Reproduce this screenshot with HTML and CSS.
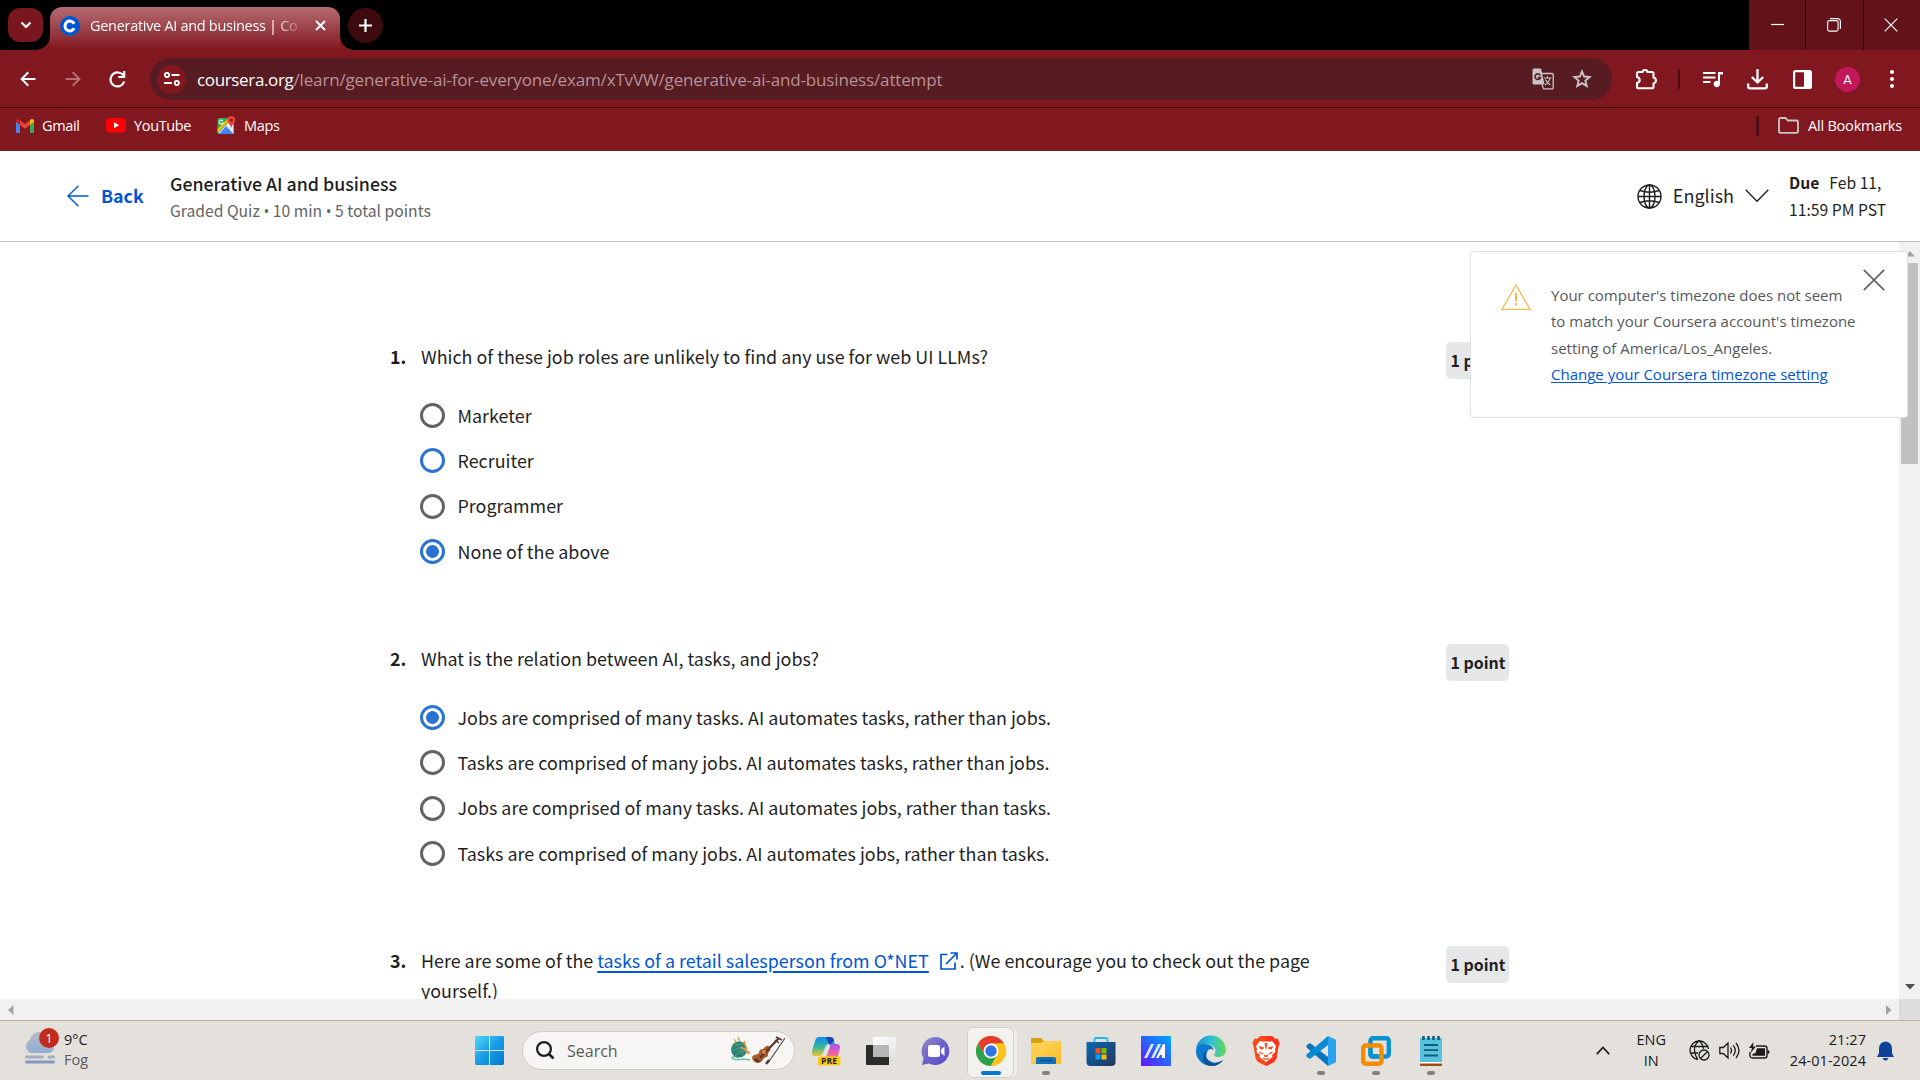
FILE: index.html
```html
<!DOCTYPE html>
<html lang="en">
<head>
<meta charset="utf-8">
<title>Generative AI and business | Coursera</title>
<link rel="stylesheet" href="styles.css">
</head>
<body>
<div class="screen">
  <div class="tabstrip">
    <div class="tab-search"><svg width="12" height="8" viewBox="0 0 12 8"><path d="M1.500 1.500 6 6l4.500-4.500" fill="none" stroke="#fff" stroke-width="2.200"/></svg></div>
    <div class="tab">
      <svg class="favicon" width="20" height="20" viewBox="0 0 20 20"><circle cx="10" cy="10" r="10" fill="#0056d2"/><path d="M14.200 12.300A4.900 4.900 0 1 1 14.200 7.700" fill="none" stroke="#fff" stroke-width="3"/></svg>
      <span class="tab-title">Generative AI and business | Co</span>
      <svg width="11" height="11" viewBox="0 0 11 11"><path d="m1 1 9 9M10 1l-9 9" stroke="#fff" stroke-width="1.900"/></svg>
    </div>
    <div class="new-tab"><svg width="13" height="13" viewBox="0 0 13 13"><path d="M6.500 0v13M0 6.500h13" stroke="#fff" stroke-width="2.200"/></svg></div>
    <div class="win-controls">
      <div class="win-button"><svg width="13" height="13" viewBox="0 0 13 13"><path d="M0 6.500h13" stroke="#fff" stroke-width="1.200"/></svg></div>
      <div class="win-button"><svg width="14" height="14" viewBox="0 0 14 14" fill="none" stroke="#fff" stroke-width="1.100"><rect x=".6" y="2.600" width="10.500" height="10.500" rx="1.800"/><path d="M3 .6h7.500a2.800 2.800 0 0 1 2.900 2.900V11"/></svg></div>
      <div class="win-button"><svg width="14" height="14" viewBox="0 0 14 14"><path d="m.7.7 12.600 12.600m0-12.600L.7 13.300" stroke="#fff" stroke-width="1.200"/></svg></div>
    </div>
  </div>

  <div class="toolbar">
    <div class="nav-icons">
      <svg width="16" height="16" viewBox="0 0 16 16" fill="none" stroke="#fff" stroke-width="2"><path d="M15.500 8H2M8.300 1.300 1.600 8l6.700 6.700"/></svg>
      <svg width="16" height="16" viewBox="0 0 16 16" fill="none" stroke="#b56f75" stroke-width="2"><path d="M.5 8H14M7.700 1.300 14.400 8l-6.700 6.700"/></svg>
      <svg width="17" height="17" viewBox="0 0 17 17"><path d="M14.500 4.800A7 7 0 1 0 15.200 10.500" fill="none" stroke="#fff" stroke-width="2.200"/><path d="M16.300 0v7H9.300V5H14V0z" fill="#fff"/></svg>
    </div>
    <div class="omnibox">
      <div class="site-info"><svg width="16" height="14" viewBox="0 0 16 14" fill="none" stroke="#fff" stroke-width="1.900"><circle cx="3" cy="3" r="2.100"/><path d="M7.500 3H15.500M0 11h8"/><circle cx="12.800" cy="11" r="2.100"/></svg></div>
      <div class="url"><span class="host">coursera.org</span>/learn/generative-ai-for-everyone/exam/xTvVW/generative-ai-and-business/attempt</div>
      <svg class="translate" width="22" height="22" viewBox="0 0 22 22"><path d="M2 .5h7l3.500 16H2A1.500 1.500 0 0 1 .5 15V2A1.500 1.500 0 0 1 2 .5z" fill="#c9c5c6"/><path d="M9.500 5.500H20A1.300 1.300 0 0 1 21.200 7v12.500a1.300 1.300 0 0 1-1.300 1.400H11.500l-1.500-4.500" fill="none" stroke="#c9c5c6" stroke-width="1.300"/><path d="M8.300 7.400A2.800 2.800 0 1 0 8.500 9.500H5.800" fill="none" stroke="#571b22" stroke-width="1.600"/><path d="M12 10h7.500M15.500 8.300V10m2.500 0c-.6 3-2.800 5.500-5 7m.5-5.500c1 2.500 3 4.500 5 5.500" fill="none" stroke="#c9c5c6" stroke-width="1.200"/></svg>
      <svg width="20" height="20" viewBox="0 0 20 20"><path d="m10 2.400 2.100 5.100 5.500.5-4.200 3.600 1.300 5.400-4.700-2.900L5.300 17l1.300-5.400L2.400 8l5.500-.5z" fill="none" stroke="#c9c5c6" stroke-width="1.900"/></svg>
    </div>
    <div class="actions">
      <svg class="act-ext" width="22" height="21" viewBox="0 0 22 21"><path d="M2 4.500q0-1.500 1.500-1.500H7.500q.5-2 2.500-2t2.500 2H17q1.500 0 1.500 1.500V8.500q2.500.5 2.500 3t-2.500 3v3.300q0 1.500-1.500 1.500H3.500q-1.500 0-1.500-1.500V14q2.700-.7 2.700-3T2 8z" fill="none" stroke="#fff" stroke-width="2.100"/></svg>
      <span class="divider act-div"></span>
      <svg class="act-music" width="20" height="17" viewBox="0 0 20 17"><path d="M0 2h12.500M0 6.500h12.500M0 11h7.500" stroke="#fff" stroke-width="2"/><path d="M15 1h5v2.500h-3V13a3.200 3.200 0 1 1-2-3z" fill="#fff"/></svg>
      <svg class="act-down" width="21" height="21" viewBox="0 0 21 21" fill="none" stroke="#fff" stroke-width="2.300"><path d="M10.500 0v13M4.800 8l5.700 5.500L16.200 8M1.200 14.500v3q0 1.800 1.800 1.800h15q1.800 0 1.800-1.800v-3"/></svg>
      <svg class="act-panel" width="19" height="19" viewBox="0 0 19 19"><rect x="1.100" y="1.100" width="16.800" height="16.800" rx="1.500" fill="none" stroke="#fff" stroke-width="2.200"/><path d="M11 1h7v17h-7z" fill="#fff"/></svg>
      <span class="avatar">A</span>
      <svg width="4" height="18" viewBox="0 0 4 18" fill="#fff"><circle cx="2" cy="2" r="2"/><circle cx="2" cy="9" r="2"/><circle cx="2" cy="16" r="2"/></svg>
    </div>
  </div>

  <div class="bookmarks">
    <a class="bookmark bm-gmail"><svg width="18" height="14" viewBox="0 0 18 14"><path d="M0 1.500V13q0 1 1 1h3V5z" fill="#4285f4"/><path d="M18 1.500V13q0 1-1 1h-3V5z" fill="#34a853"/><path d="M14 1.200V6l4-3V2q0-2-2-2-1 0-2 1.200z" fill="#fbbc04"/><path d="M4 6V1.200L9 5l5-3.800V6L9 9.800z" fill="#ea4335"/><path d="M0 2v1l4 3V1.200Q3 0 2 0 0 0 0 2z" fill="#c5221f"/></svg><span>Gmail</span></a>
    <a class="bookmark bm-youtube"><svg width="20" height="15" viewBox="0 0 20 15"><rect width="20" height="14.500" rx="3.500" fill="red"/><path d="m8 4.200 5.200 3L8 10.300z" fill="#fff"/></svg><span>YouTube</span></a>
    <a class="bookmark bm-maps"><svg width="19" height="19" viewBox="0 0 19 19"><rect x=".5" y="2" width="16" height="16" rx="1.500" fill="#34a853"/><path d="M1 17 13 5l3.500 2v11z" fill="#e8eaed"/><path d="M.5 13 11.500 2H15L.5 16.500z" fill="#fbbc04"/><path d="m9 10 7.500 8H2z" fill="#4285f4"/><path d="M5.900 5A2 2 0 1 0 6 7H4.500" fill="none" stroke="#fff" stroke-width="1.100"/><path d="M14.300 0a4 4 0 0 0-4 4c0 3 3.300 4 4 8 .7-4 4-5 4-8a4 4 0 0 0-4-4z" fill="#ea4335"/><circle cx="14.300" cy="4" r="1.500" fill="#8c1a18"/></svg><span>Maps</span></a>
    <span class="divider bm-div"></span>
    <a class="bookmark bm-all"><svg width="21" height="17" viewBox="0 0 21 17"><path d="M1 2.500Q1 1 2.500 1H7.500l2.300 2.500h8.700Q20 3.500 20 5v9.500q0 1.300-1.500 1.300h-16Q1 15.800 1 14.500z" fill="none" stroke="#c9c5c6" stroke-width="1.800"/></svg><span>All Bookmarks</span></a>
  </div>

  <header class="quiz-header">
    <a class="back"><svg width="22" height="22" viewBox="0 0 22 22" fill="none" stroke="#0056d2" stroke-width="1.400"><path d="M21.500 11H1M11.500.8 1 11l10.500 10.200"/></svg><span>Back</span></a>
    <div class="quiz-title"><h1>Generative AI and business</h1><p>Graded Quiz <span class="dot">•</span> 10 min <span class="dot">•</span> 5 total points</p></div>
    <div class="language">
      <svg width="25" height="25" viewBox="0 0 25 25" fill="none" stroke="#1f1f1f" stroke-width="1.400"><circle cx="12.500" cy="12.500" r="11.500"/><ellipse cx="12.500" cy="12.500" rx="5.500" ry="11.500"/><path d="M12.500 1v23M1 12.500h23M3 6.500q9.500 3.500 19 0M3 18.500q9.500-3.500 19 0"/></svg>
      <span>English</span>
      <svg width="24" height="14" viewBox="0 0 24 14"><path d="m.7.8 11.300 11.500L23.300.8" fill="none" stroke="#1f1f1f" stroke-width="1.400"/></svg>
    </div>
    <div class="due"><p><b>Due</b>Feb 11,</p><p>11:59 PM PST</p></div>
  </header>

  <div class="viewport">
    <main class="quiz">
      <section class="question">
        <div class="number">1.</div>
        <div class="body">
          <p class="prompt">Which of these job roles are unlikely to find any use for web UI LLMs?</p>
          <div class="option"><i class="radio"></i><span>Marketer</span></div>
          <div class="option"><i class="radio focus"></i><span>Recruiter</span></div>
          <div class="option"><i class="radio"></i><span>Programmer</span></div>
          <div class="option"><i class="radio checked"></i><span>None of the above</span></div>
        </div>
        <div class="points">1 point</div>
      </section>
      <section class="question">
        <div class="number">2.</div>
        <div class="body">
          <p class="prompt">What is the relation between AI, tasks, and jobs?</p>
          <div class="option"><i class="radio checked"></i><span>Jobs are comprised of many tasks. AI automates tasks, rather than jobs.</span></div>
          <div class="option"><i class="radio"></i><span>Tasks are comprised of many jobs. AI automates tasks, rather than jobs.</span></div>
          <div class="option"><i class="radio"></i><span>Jobs are comprised of many tasks. AI automates jobs, rather than tasks.</span></div>
          <div class="option"><i class="radio"></i><span>Tasks are comprised of many jobs. AI automates jobs, rather than tasks.</span></div>
        </div>
        <div class="points">1 point</div>
      </section>
      <section class="question">
        <div class="number">3.</div>
        <div class="body">
          <p class="prompt">Here are some of the <a class="link">tasks of a retail salesperson from O*NET</a><svg class="external" width="18" height="18" viewBox="0 0 18 18" fill="none" stroke="#0056d2" stroke-width="1.700"><path d="M7.500 2.500H1v14.500h14V10.500M6 12 16.500 1.500M10.500 1H17v6.500"/></svg>. (We encourage you to check out the page yourself.)</p>
        </div>
        <div class="points">1 point</div>
      </section>
    </main>
    <div class="vscroll">
      <svg width="10" height="6" viewBox="0 0 10 6"><path d="M0 5.500 5 0l5 5.500z" fill="#a3a3a3"/></svg>
      <div class="thumb"></div>
      <svg width="10" height="6" viewBox="0 0 10 6"><path d="M0 0h10L5 5.500z" fill="#505050"/></svg>
    </div>
    <aside class="notice">
      <svg class="warning" width="30" height="28" viewBox="0 0 30 28"><path d="M15 2 1 26.300h28z" fill="none" stroke="#f5b94f" stroke-width="1.300"/><path d="M15 10v8.500m0 1.700v2.400" stroke="#f5b94f" stroke-width="2"/></svg>
      <p>Your computer's timezone does not seem<br>to match your Coursera account's timezone<br>setting of America/Los_Angeles.<br><a class="link">Change your Coursera timezone setting</a></p>
      <svg class="close" width="22" height="22" viewBox="0 0 22 22"><path d="m.8.8 20.400 20.400m0-20.400L.8 21.200" stroke="#636363" stroke-width="1.700"/></svg>
    </aside>
  </div>
  <div class="hscroll">
    <svg width="6" height="10" viewBox="0 0 6 10"><path d="M5.500 0v10L0 5z" fill="#a3a3a3"/></svg>
    <svg class="scroll-right" width="6" height="10" viewBox="0 0 6 10"><path d="M0 0v10l5.500-5z" fill="#a3a3a3"/></svg>
    <div class="corner"></div>
  </div>

  <footer class="taskbar">
    <div class="weather">
      <svg width="40" height="40" viewBox="0 0 40 40"><defs><linearGradient id="cloud" x2="0" y2="1"><stop stop-color="#b3bcc5"/><stop offset="1" stop-color="#93add5"/></linearGradient></defs><path d="M7 28a7 7 0 0 1-1-13 10 10 0 0 1 19-2 8 8 0 0 1 5 8q0 7-6 7z" fill="url(#cloud)"/><path d="M2.500 32h16M25 32h4.500" stroke="#a3b0c2" stroke-width="3" stroke-linecap="round"/><path d="M2.500 37h27" stroke="#8499bf" stroke-width="3" stroke-linecap="round"/></svg>
      <span class="alert-count">1</span>
      <div class="weather-text"><p>9°C</p><p class="condition">Fog</p></div>
    </div>
    <svg class="start" width="29" height="29" viewBox="0 0 29 29"><defs><linearGradient id="win" gradientUnits="userSpaceOnUse" x2="29" y2="29"><stop stop-color="#55d5ff"/><stop offset=".5" stop-color="#199be5"/><stop offset="1" stop-color="#0078d4"/></linearGradient></defs><path d="M1 0h13v14H0V1zM15 0h13l1 1v13H15zM0 15h14v14H1l-1-1zM15 15h14v13l-1 1H15z" fill="url(#win)"/></svg>
    <div class="search">
      <svg width="19" height="19" viewBox="0 0 19 19"><circle cx="8" cy="8" r="6.900" fill="none" stroke="#1f1f1f" stroke-width="2.200"/><path d="m13 13 4.500 4.500" stroke="#1f1f1f" stroke-width="2.600"/></svg>
      <span>Search</span>
      <svg width="56" height="30" viewBox="0 0 56 30"><path d="M9 21q-7-1-7 1 1 2 8 1.500t10 .5" fill="none" stroke="#68bba3" stroke-width="1.500"/><path d="M4 3l9 17M8 1l4 10" stroke="#e5a35c" stroke-width="1.600"/><circle cx="9" cy="13.500" r="8" fill="#2d806f"/><path d="M2 11q6-5 12-2M2 15q7-5 14-2M5 20q5-6 11-5M5 7q6 3 8 13" fill="none" stroke="#4fa08b"/><path d="m11 11 9 6M14 5l4 13" stroke="#e8964b" stroke-width="1.700"/><path d="M24 19q3 0 5-2 0-4 4-4 3-4 6-3 3 4-1 7 1 4-4 5-2 5-7 5-4-1-5-5 0-2 2-3z" fill="#a95a29"/><path d="m30 22 19-20" stroke="#57382d" stroke-width="2.200"/><path d="M46 1l6 3M45 4l4 3" stroke="#57382d" stroke-width="1.400"/><path d="m25 23 4 3" stroke="#4b2816" stroke-width="2"/><path d="M55 2 38 27" stroke="#5b5253" stroke-width="1.300"/><path d="m36 28 3-4" stroke="#4a3634" stroke-width="2.200"/><circle cx="34" cy="16" r="2" fill="#d88b4a"/></svg>
    </div>
    <div class="apps">
      <div class="app"><svg width="32" height="32" viewBox="0 0 32 32"><defs><linearGradient id="co1" x2="0" y2="1"><stop stop-color="#138ae8"/><stop offset=".5" stop-color="#32b5a8"/><stop offset="1" stop-color="#f0c52c"/></linearGradient><linearGradient id="co2" x2="0" y2="1"><stop stop-color="#a454ef"/><stop offset=".6" stop-color="#ef619e"/><stop offset="1" stop-color="#fa9b5d"/></linearGradient></defs><path d="M9 2h11q3 0 4 4l1 3h-6q-3 0-4 4l-2 5q-1 3-4 3H5q-4 0-3-5L5 6q1-4 4-4z" fill="url(#co1)"/><path d="M16 2h4q4 0 4 4l-3 3h-2z" fill="#1749bd"/><path d="M19 9h8q3 0 3 4l-2 8q-1 4-5 4h-9q2-1 3-5l3-8q0-2-1-3z" fill="url(#co2)"/><rect x="8" y="21.500" width="22.500" height="9" rx="2" fill="#ffc90e"/><text x="11" y="29" class="pre-label">PRE</text></svg></div>
      <div class="app"><svg width="32" height="32" viewBox="0 0 32 32"><defs><linearGradient id="pane" x2="1" y2="1"><stop stop-color="#fff"/><stop offset="1" stop-color="#e3e3e3"/></linearGradient></defs><path d="M2 10h22v20H2q-1 0-1-1V11q0-1 1-1z" fill="#2b2b2b"/><rect x="8" y="2" width="23" height="20" rx="1" fill="url(#pane)"/><path d="M8 10h16v12H8z" fill="#b7b7b7"/></svg></div>
      <div class="app"><svg width="32" height="32" viewBox="0 0 32 32"><defs><linearGradient id="chat" x2="1" y2="1"><stop stop-color="#9a8cc0"/><stop offset=".5" stop-color="#6a62cc"/><stop offset="1" stop-color="#5148c8"/></linearGradient></defs><path d="M16 2a14 14 0 1 1-7 26.500l-7 1.500 1.500-7A14 14 0 0 1 16 2z" fill="url(#chat)"/><rect x="8" y="10" width="12" height="12" rx="2" fill="#fff"/><path d="m21 14.500 3.500-3v9.500l-3.500-3z" fill="#fff"/></svg></div>
      <div class="app active"><svg width="32" height="32" viewBox="0 0 32 32"><circle cx="16" cy="16" r="15" fill="#fcc31e"/><path d="M3 8.500A15 15 0 0 1 29 8.500H16L9.500 19.700z" fill="#e33b2e"/><path d="M3 8.500 9.500 19.700 22 20 16 31A15 15 0 0 1 3 8.500z" fill="#2da14b"/><path d="M16 8.500h13A15 15 0 0 1 15.700 31l7-11.500z" fill="#fcc31e"/><circle cx="16" cy="16" r="7.500" fill="#fff"/><circle cx="16" cy="16" r="5.700" fill="#2f73e0"/></svg></div>
      <div class="app running"><svg width="32" height="32" viewBox="0 0 32 32"><defs><linearGradient id="folder" x2="1" y2="1"><stop stop-color="#ffd65c"/><stop offset="1" stop-color="#fcbd2c"/></linearGradient></defs><path d="M1 4q0-1 1-1h9l3 3v6H1z" fill="#d9a010"/><path d="M1 8h10l3-2h16q1 0 1 1v21q0 1-1 1H2q-1 0-1-1z" fill="url(#folder)"/><path d="M6 29v-5q0-2 2-2h16q2 0 2 2v5z" fill="#1272be"/><path d="M10 25.500h12" stroke="#0a4d8c" stroke-width="1.600"/></svg></div>
      <div class="app"><svg width="32" height="32" viewBox="0 0 32 32"><defs><linearGradient id="store" x2="1" y2="1"><stop stop-color="#0669b4"/><stop offset="1" stop-color="#25365a"/></linearGradient></defs><path d="M9.500 8V4.500q0-1.500 1.500-1.500h10q1.500 0 1.500 1.500V8" fill="none" stroke="#27b5f2" stroke-width="1.800"/><path d="M1.500 7h29v20q0 4-4 4h-21q-4 0-4-4z" fill="url(#store)"/><path d="M10.500 13h5v5.500h-5z" fill="#f25022"/><path d="M16.500 13h5v5.500h-5z" fill="#7fba00"/><path d="M10.500 19.500h5v5h-5z" fill="#00a4ef"/><path d="M16.500 19.500h5v5h-5z" fill="#ffb900"/></svg></div>
      <div class="app"><svg width="32" height="32" viewBox="0 0 32 32"><defs><linearGradient id="asus" x1="0" y1="1" x2="1" y2="0"><stop stop-color="#6415fb"/><stop offset=".5" stop-color="#2c62ff"/><stop offset="1" stop-color="#00a9ff"/></linearGradient></defs><path d="M1 1h30v30H1z" fill="url(#asus)"/><path d="m4 23 7-14h3L7 23zM11 23l7-14h3l-7 14z" fill="#dce9ff"/><path d="m16 23 7-14h2v14h-3v-3h-2l-1.500 3z" fill="#fff"/></svg></div>
      <div class="app"><svg width="32" height="32" viewBox="0 0 32 32"><defs><linearGradient id="edge" x2="1"><stop stop-color="#168bd5"/><stop offset=".5" stop-color="#2fc0d5"/><stop offset="1" stop-color="#65db55"/></linearGradient></defs><path d="M1 16A15 15 0 0 1 31 15q0 6-7 7-4 0-5-2 3-4 0-8-5-5-11-2-5 2-7 6z" fill="url(#edge)"/><path d="M1 16q2-7 9-7 7 0 9 6-5-3-7 2-3 7 5 10 5 2 11-2-4 6-12 6A15 15 0 0 1 1 16z" fill="#0c79ce"/><path d="M12 16q-4 9 5 12 6 1 11-3-4 6-12 6-8-1-8-8 0-5 4-7z" fill="#125193"/></svg></div>
      <div class="app"><svg width="32" height="32" viewBox="0 0 32 32"><path d="M10 1h12l3 3 2.500-.5 2 4.500-1 3-2 12q-1 3-3.500 4.500L16 31l-7-3.500q-2.500-1.500-3.500-4.500L3.500 11l-1-3 2-4.500L7 4z" fill="#fb4a17"/><path d="M16 1h6l3 3 2.500-.5 2 4.500-1 3-2 12q-1 3-3.500 4.500L16 31z" fill="#ff351b"/><path d="m10 6 3 .7q3-.7 6 0l3-.7 4 5-1 3 .5 3-3.500 3 .5 2-6.500 5-6.500-5 .5-2-3.500-3 .5-3-1-3z" fill="#fff"/><path d="m8.500 11 5.500 1.500-.5 1.500-3 .5zM23.500 11 18 12.500l.5 1.500 3 .5zM13.500 19l2.500 1.500 2.500-1.500-1 3h-3zM14.500 8h3L16 16z" fill="#fb4a17"/><path d="m9.500 17 3.500 2m9.500-2L19 19m-6 4 3 1.500 3-1.500" fill="none" stroke="#fb4a17" stroke-width="1.200"/></svg></div>
      <div class="app running"><svg width="32" height="32" viewBox="0 0 32 32"><path d="m1.500 10.500 2.500-2q1-.5 2 .3L23 22v9L1.500 12.500z" fill="#0876bd"/><path d="m1.500 21.500 2.500 2q1 .5 2-.3L23 10V1L1.500 19.500q-.7 1 0 2z" fill="#078bd2"/><path d="m23 1 7 3.300q1 .5 1 1.700v20q0 1.200-1 1.700L23 31z" fill="#27a3ef"/></svg></div>
      <div class="app running"><svg width="32" height="32" viewBox="0 0 32 32" fill="none" stroke-width="4.400"><rect x="10.500" y="3.200" width="18.300" height="18.300" rx="2.500" stroke="#0792d1"/><rect x="3.200" y="10.500" width="18.300" height="18.300" rx="2.500" stroke="#f28c00"/><path d="M10.500 14v5q0 2.500 2.500 2.500h5" stroke="#0792d1"/></svg></div>
      <div class="app running"><svg width="32" height="32" viewBox="0 0 32 32"><path d="M5 27h22v3q0 1-1 1H6q-1 0-1-1z" fill="#a04a13"/><path d="M5 25h22v3.500H5z" fill="#fff"/><path d="M5 4q0-1 1-1h20q1 0 1 1v23H5z" fill="#56c2e0"/><path d="M9 10h14M9 15.200h14M9 20.500h14" stroke="#125b75" stroke-width="1.800"/><path d="M8.500 1v4M13.500 1v4M18.500 1v4M23.500 1v4" stroke="#155d76" stroke-width="2.600"/></svg></div>
    </div>
    <div class="tray">
      <svg width="14" height="9" viewBox="0 0 14 9"><path d="m.8 8.200 6.200-6.700 6.200 6.700" fill="none" stroke="#1b1b1b" stroke-width="1.700"/></svg>
      <div class="input-lang"><p>ENG</p><p>IN</p></div>
      <svg class="net" width="21" height="21" viewBox="0 0 21 21" fill="none" stroke="#1b1b1b" stroke-width="1.300"><path d="M9 19.500A9.300 9.300 0 1 1 19.500 9M10 .7q-5 4-4.500 9.500T8.500 19M10 .7q4 3.500 4.500 8M1.500 6.500h17M1 13h8"/><circle cx="15" cy="15" r="5"/><path d="m11.500 18.500 7-7"/></svg>
      <svg class="sound" width="21" height="19" viewBox="0 0 21 19" fill="none" stroke="#1b1b1b" stroke-width="1.300"><path d="M.8 6.500h3.500L9 2v15l-4.700-4.500H.8zM11.500 6.500q2 3 0 6M14.300 4.300q4 5.200 0 10.400M17 2q6 7.500 0 15"/></svg>
      <svg class="battery" width="21" height="18" viewBox="0 0 21 18"><path d="M7 4h8.500Q18 4 18 6.500v7q0 2.500-2.500 2.500h-12Q1 16 1 13.500V10" fill="none" stroke="#1b1b1b" stroke-width="1.400"/><path d="M8 6.300h8v7.500H3.500V12l3-1z" fill="#1b1b1b"/><path d="M18.500 8q2 0 2 2t-2 2z" fill="#1b1b1b"/><path d="M4.500 0 0 6h3l-1.500 5L7 4.500H4z" fill="#1b1b1b"/></svg>
      <div class="clock"><p>21:27</p><p>24-01-2024</p></div>
      <svg class="bell" width="17" height="20" viewBox="0 0 17 20"><path d="M8.500.5Q15 1 15 8v4l2 4H0l2-4V8q0-7 6.500-7.500zM5.500 17h6q-1 2.500-3 2.500t-3-2.500z" fill="#0c4399"/></svg>
    </div>
  </footer>
</div>
</body>
</html>
```
FILE: styles.css
```css
* { box-sizing: border-box; }
body { margin: 0; }
p, h1 { margin: 0; }
svg { display: block; flex: none; }
.screen {
  width: 1920px; height: 1080px; overflow: hidden;
  display: flex; flex-direction: column;
  background: #fff; color: #1f1f1f;
  font-family: "Noto Sans CJK SC", "Open Sans", sans-serif;
}

/* browser chrome */
.tabstrip, .toolbar, .bookmarks, .taskbar { font-family: "Open Sans", "Noto Sans", sans-serif; color: #fff; }
.tabstrip { flex: none; height: 50px; display: flex; background: #000; padding-left: 8px; }
.tab-search { width: 35px; height: 34px; margin: 8px 7px 0 0; border-radius: 12px; background: #7a161e; display: flex; align-items: center; justify-content: center; }
.tab {
  position: relative; width: 290px; margin-top: 7px; padding: 0 15px 6px 10px;
  border-radius: 12px 12px 0 0; display: flex; align-items: center;
  background: linear-gradient(#b56c72, #81171f);
}
.tab::before, .tab::after { content: ""; position: absolute; bottom: 0; width: 14px; height: 14px; }
.tab::before { left: -14px; background: radial-gradient(circle at 0 0, transparent 13.500px, #81171f 14px); }
.tab::after { right: -14px; background: radial-gradient(circle at 100% 0, transparent 13.500px, #81171f 14px); }
.tab-title {
  width: 208px; margin: 0 17px 0 10px; white-space: nowrap;
  font-size: 14.500px; letter-spacing: -0.300px; line-height: 22px;
  mask-image: linear-gradient(90deg, #000 184px, transparent 214px);
}
.new-tab { width: 35px; height: 35px; margin: 8px 0 0 8px; border-radius: 50%; background: #3d0a0f; display: flex; align-items: center; justify-content: center; }
.win-controls { margin-left: auto; display: flex; gap: 1px; }
.win-button { width: 57px; padding: 0 2px 1px 0; background: #64121a; display: flex; align-items: center; justify-content: center; }
.win-button:first-child { width: 56px; padding-right: 0; }
.win-button:last-child { width: 56px; }

.toolbar { flex: none; height: 58px; display: flex; align-items: flex-start; background: #81171f; border-bottom: 1px solid #3f080d; padding: 8px 0 0 20px; }
.nav-icons { flex: none; width: 130px; height: 42px; display: flex; align-items: center; gap: 28.500px; }
.omnibox { flex: none; width: 1462px; height: 42px; border-radius: 21px; background: #571b22; display: flex; align-items: center; padding: 0 20px 0 7px; }
.site-info { width: 29px; height: 29px; border-radius: 50%; background: #81171f; display: flex; align-items: center; justify-content: center; }
.url { flex: 1; padding: 1px 0 0 11px; font-size: 17px; letter-spacing: -0.150px; line-height: 24px; color: #b79296; white-space: nowrap; }
.host { color: #fff; letter-spacing: -0.350px; }
.translate { margin-right: 18px; }
.actions { flex: 1; height: 42px; display: flex; align-items: center; }
.divider { flex: none; width: 2px; height: 20px; background: #4a0d13; border-radius: 1px; }
.act-ext { margin-left: 23px; }
.act-div { margin-left: 21px; }
.act-music { margin-left: 23px; }
.act-down { margin-left: 24px; }
.act-panel { margin-left: 25px; }
.avatar { flex: none; width: 25px; height: 25px; margin: 0 30px 0 23px; border-radius: 50%; background: #c2185b; font: 13px/25px Roboto, sans-serif; text-align: center; }

.bookmarks { flex: none; height: 43px; display: flex; align-items: center; background: #81171f; padding: 0 18px 8px 16px; font-size: 14.500px; letter-spacing: -0.350px; line-height: 22px; }
.bookmark { display: flex; align-items: center; gap: 8px; white-space: nowrap; }
.bm-gmail { width: 90px; }
.bm-youtube { width: 111px; }
.bm-div { width: 3px; margin: 0 19px 0 auto; }
.bm-all { gap: 9px; letter-spacing: -0.200px; }

/* quiz header */
.quiz-header { flex: none; height: 91px; border-bottom: 1px solid #bdbdbd; display: flex; padding: 0 34px 0 67px; }
.back { width: 103px; display: flex; align-items: center; gap: 12px; color: #0056d2; font-size: 17.800px; font-weight: 700; }
.back span { padding-bottom: 2px; }
.quiz-title { padding-top: 18px; }
.quiz-title h1 { font-size: 17.750px; font-weight: 500; line-height: 28px; }
.quiz-title p { margin-top: 1px; font-size: 15.700px; line-height: 26px; color: #636363; }
.dot { font-family: "Open Sans", sans-serif; line-height: 1; }
.language { margin-left: auto; display: flex; align-items: center; gap: 11px; font-size: 18px; }
.language span { padding-bottom: 2px; }
.due { width: 97px; margin-left: 20px; padding-top: 18px; font-size: 15.700px; line-height: 27px; white-space: nowrap; }
.due b { margin-right: 10px; }

/* quiz body */
.viewport { position: relative; flex: none; height: 757px; display: flex; overflow: hidden; }
.quiz { width: 1899px; padding: 99px 0 0 390px; font-size: 17.900px; line-height: 30px; }
.question { height: 302px; display: flex; }
.number { width: 31px; font-weight: 700; }
.body { width: 900px; margin-right: 125px; }
.prompt { margin-bottom: 22px; }
.option { height: 45.300px; display: flex; align-items: center; gap: 12.500px; white-space: nowrap; }
.option span { padding-bottom: 2px; }
.radio { flex: none; width: 25px; height: 25px; margin-left: -1px; border: 3px solid #636363; border-radius: 50%; }
.focus { border-color: #2a73d2; }
.checked { border-color: #2a73d2; background: radial-gradient(circle, #2a73d2 6px, #fff 6.700px); }
.points { width: 63px; height: 37px; margin-top: 1px; padding-left: 1px; border-radius: 5px; background: #e5e7e8; text-align: center; font-size: 15.900px; font-weight: 700; line-height: 37px; white-space: nowrap; }
.link { color: #0056d2; text-decoration: underline; text-underline-offset: 3px; text-decoration-thickness: 2px; }
.external { display: inline-block; margin: 0 2px 0 11px; vertical-align: -2px; }

.vscroll { width: 21px; background: #f1f1f1; display: flex; flex-direction: column; align-items: center; padding: 9px 0; }
.thumb { width: 17px; height: 201px; margin: 6px 0 auto; background: #c1c1c1; }
.notice {
  position: absolute; left: 1470px; top: 9px; width: 438px; height: 167px; padding: 30px 22px 0 30px;
  display: flex; background: #fff; border: 1px solid #e1e1e1; border-radius: 4px;
  font: 15px/26.400px "Open Sans", sans-serif; color: #55575b;
}
.notice p { margin-left: 20px; white-space: nowrap; }
.notice .link { text-decoration-thickness: 1px; text-underline-offset: 2px; }
.warning { margin-top: 1px; }
.close { margin: -13px 0 0 auto; }
.hscroll { flex: none; height: 21px; background: #f1f1f1; display: flex; align-items: center; padding-left: 8px; }
.scroll-right { margin: 0 7px 0 auto; }
.corner { width: 21px; height: 21px; background: #dcdcdc; }

/* taskbar */
.taskbar { flex: none; height: 60px; display: flex; align-items: center; border-top: 1px solid #b5b1ae; background: #e4e0dc; color: #1b1b1b; font-size: 14.500px; line-height: 20px; }
.weather { position: relative; width: 475px; height: 60px; padding: 4px 0 0 24px; display: flex; }
.alert-count { position: absolute; left: 39px; top: 7px; width: 20px; height: 20px; border-radius: 50%; background: #c42b1c; color: #fff; font-size: 13px; text-align: center; }
.weather-text { padding: 5px 0 0; }
.condition { color: #5c5a58; }
.search { width: 273px; height: 39px; margin: 0 3px 0 18px; padding: 0 8px 0 13px; border: 1px solid #cfccc8; border-radius: 20px; background: #f8f6f4; display: flex; align-items: center; font-size: 16px; color: #5c5a58; }
.search span { margin: 0 auto 0 12px; }
.apps { display: flex; }
.app { position: relative; width: 55px; height: 60px; display: flex; align-items: center; justify-content: center; }
.app svg { position: relative; }
.pre-label { font: 700 8.500px "Open Sans", sans-serif; letter-spacing: 0.200px; fill: #1b1b1b; }
.active::before { content: ""; position: absolute; left: 4px; top: 6px; width: 45px; height: 49px; border: 1px solid #d3cfcb; border-radius: 6px; background: #f3f1ee; box-shadow: 4px 0 0 -1px #efece9; }
.active::after, .running::after { content: ""; position: absolute; bottom: 6px; left: 24px; width: 8px; height: 4px; border-radius: 2px; background: #83807d; }
.active::after { left: 18px; width: 20px; background: #0078d4; }
.tray { margin-left: auto; padding-right: 26px; display: flex; align-items: center; line-height: 20.500px; }
.input-lang { margin-left: 26px; text-align: center; }
.net { margin-left: 23px; }
.sound { margin-left: 9px; }
.battery { margin-left: 9px; }
.clock { width: 96px; text-align: right; letter-spacing: 0.050px; }
.bell { margin-left: 11px; }
```
